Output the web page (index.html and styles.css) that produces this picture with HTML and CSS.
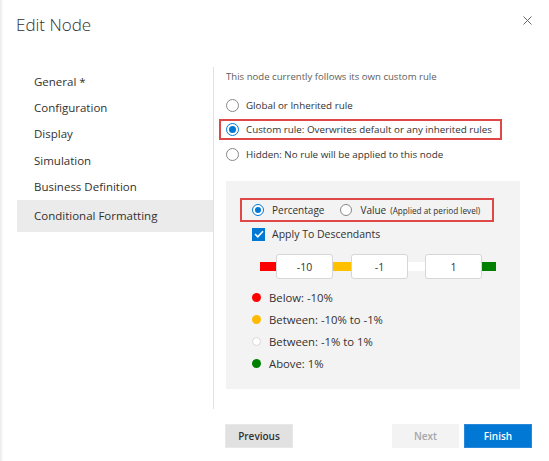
FILE: index.html
```html
<!DOCTYPE html>
<html lang="en">
<head>
<meta charset="utf-8">
<title>Edit Node</title>
<link rel="stylesheet" href="styles.css">
</head>
<body>
<div class="dialog">
  <header class="header">
    <h1 class="title">Edit Node</h1>
    <button class="close" aria-label="Close">
      <svg width="9" height="9" viewBox="0 0 9 9"><path d="M0.5 0.5 L8.5 8.5 M8.5 0.5 L0.5 8.5" stroke="#666" stroke-width="1" fill="none"/></svg>
    </button>
  </header>
  <div class="main">
    <nav class="nav">
      <div class="nav-item">General *</div>
      <div class="nav-item">Configuration</div>
      <div class="nav-item">Display</div>
      <div class="nav-item">Simulation</div>
      <div class="nav-item">Business Definition</div>
      <div class="nav-item active">Conditional Formatting</div>
    </nav>
    <section class="content">
      <p class="intro">This node currently follows its own custom rule</p>
      <div class="row"><span class="radio"></span><span>Global or Inherited rule</span></div>
      <div class="row hl"><span class="radio on"></span><span>Custom rule: Overwrites default or any inherited rules</span></div>
      <div class="row"><span class="radio"></span><span>Hidden: No rule will be applied to this node</span></div>
      <div class="panel">
        <div class="mode">
          <span class="radio on"></span><span class="mode-label first">Percentage</span>
          <span class="radio"></span><span class="mode-label second">Value</span><span class="note">(Applied at period level)</span>
        </div>
        <div class="check-row"><span class="check"><svg width="10" height="8" viewBox="0 0 10 8"><path d="M1 4 L3.8 6.8 L9 1.2" stroke="#fff" stroke-width="1.6" fill="none"/></svg></span><span>Apply To Descendants</span></div>
        <div class="slider">
          <span class="bar red"></span>
          <span class="box">-10</span>
          <span class="bar yellow"></span>
          <span class="box">-1</span>
          <span class="bar white"></span>
          <span class="box">1</span>
          <span class="bar green"></span>
        </div>
        <ul class="legend">
          <li><span class="dot red"></span>Below: -10%</li>
          <li><span class="dot yellow"></span>Between: -10% to -1%</li>
          <li><span class="dot white"></span>Between: -1% to 1%</li>
          <li><span class="dot green"></span>Above: 1%</li>
        </ul>
      </div>
    </section>
  </div>
  <footer class="footer">
    <button class="btn prev">Previous</button>
    <span class="spacer"></span>
    <button class="btn next">Next</button>
    <button class="btn finish">Finish</button>
  </footer>
</div>
</body>
</html>
```

FILE: styles.css
```css
* { box-sizing: border-box; }
html, body { margin: 0; padding: 0; }
body {
  background: #fff;
  font-family: "Open Sans", "Noto Sans", sans-serif;
  color: #323130;
  width: 549px;
  height: 461px;
  overflow: hidden;
}
.dialog {
  width: 549px;
  height: 461px;
  position: relative;
  background: #fff;
  box-shadow: inset 3px 0 2px -1px rgba(0,0,0,0.07);
  display: flex;
  flex-direction: column;
}
.header {
  height: 67px;
  padding: 13px 0 0 16px;
}
.title {
  margin: 0;
  font-weight: 300;
  font-size: 17px;
  line-height: 24px;
  color: #323130;
}
.close {
  position: absolute;
  top: 15px;
  right: 16px;
  width: 11px;
  height: 11px;
  padding: 1px;
  border: 0;
  background: none;
  display: flex;
}
.main {
  display: flex;
  height: 342px;
}
.nav {
  width: 197px;
  margin-left: 17px;
  padding-top: 2px;
  border-right: 1px solid #e1e1e1;
}
.nav-item {
  height: 26px;
  line-height: 26px;
  padding-left: 17px;
  font-size: 11.5px;
  color: #323130;
}
.nav-item:nth-child(4) { margin-top: 1px; }
.nav-item.active {
  height: 32px;
  line-height: 32px;
  background: #ebebeb;
}
.content {
  padding: 2px 0 0 12px;
  font-size: 9.8px;
  color: #323130;
}
.intro {
  margin: 0;
  height: 16px;
  line-height: 16px;
  color: #605e5c;
  font-size: 9.6px;
}
.row {
  display: flex;
  align-items: center;
  height: 24px;
}
.intro + .row { margin-top: 8px; }
.row.hl {
  height: 21px;
  width: max-content;
  margin: 2px 0 2px -7px;
  padding: 0 8px 0 5px;
  border: 2px solid #e04848;
}
.radio {
  width: 13px;
  height: 13px;
  border: 1px solid #8a8886;
  border-radius: 50%;
  background: #fff;
  margin-right: 7px;
  flex: none;
  position: relative;
}
.radio.on { border-color: #0078d4; }
.radio.on::after {
  content: "";
  position: absolute;
  left: 2px; top: 2px;
  width: 7px; height: 7px;
  border-radius: 50%;
  background: #0078d4;
}
.panel {
  margin-top: 15px;
  width: 294px;
  height: 208px;
  background: #f3f3f3;
  padding: 17px 0 0 14px;
}
.mode {
  display: flex;
  align-items: center;
  width: 254px;
  height: 24px;
  border: 2px solid #e04848;
  padding-left: 10px;
  font-size: 10px;
}
.mode .radio { width: 12px; height: 12px; margin-right: 8px; }
.mode .radio.on::after { left: 2px; top: 2px; width: 6px; height: 6px; }
.mode-label.first { margin-right: 16px; }
.mode-label.second { margin-right: 4px; }
.note { font-size: 8.2px; color: #323130; }
.check-row {
  display: flex;
  align-items: center;
  height: 24px;
  padding-left: 12px;
  font-size: 10.5px;
}
.check {
  width: 13px;
  height: 13px;
  background: #0078d4;
  margin-right: 7px;
  display: flex;
  align-items: center;
  justify-content: center;
}
.slider {
  display: flex;
  align-items: center;
  margin: 8px 0 0 20px;
  height: 25px;
}
.bar { height: 9px; flex: none; }
.bar.red { width: 16px; background: #ff0000; }
.bar.yellow { width: 18px; background: #ffc000; }
.bar.white { width: 17px; background: #fff; }
.bar.green { width: 14px; background: #008000; }
.box {
  width: 57px;
  height: 25px;
  background: #fff;
  border: 1px solid #d6d6d6;
  border-radius: 3px;
  display: flex;
  align-items: center;
  justify-content: center;
  font-size: 10.5px;
  color: #333;
}
.legend {
  list-style: none;
  margin: 7px 0 0 12px;
  padding: 0;
  font-size: 11.3px;
}
.legend li {
  height: 22px;
  display: flex;
  align-items: center;
}
.dot {
  width: 9px;
  height: 9px;
  border-radius: 50%;
  margin-right: 8px;
}
.dot.red { background: #ff0000; }
.dot.yellow { background: #ffb900; }
.dot.white { background: #fff; border: 1px solid #d8d8d8; }
.dot.green { background: #008000; }
.footer {
  display: flex;
  padding: 15px 17px 0 225px;
}
.spacer { flex: 1; }
.btn {
  width: 68px;
  height: 24px;
  border: 1px solid transparent;
  font-family: inherit;
  font-size: 10px;
  font-weight: 600;
  padding: 0;
}
.prev { background: #e1e1e1; border-color: #e8e8e8; color: #323130; }
.next { width: 67px; background: #f3f3f3; color: #a6a6a6; margin-right: 5px; }
.finish { background: #0078d4; border-color: #2b88d8; color: #fff; }
```
